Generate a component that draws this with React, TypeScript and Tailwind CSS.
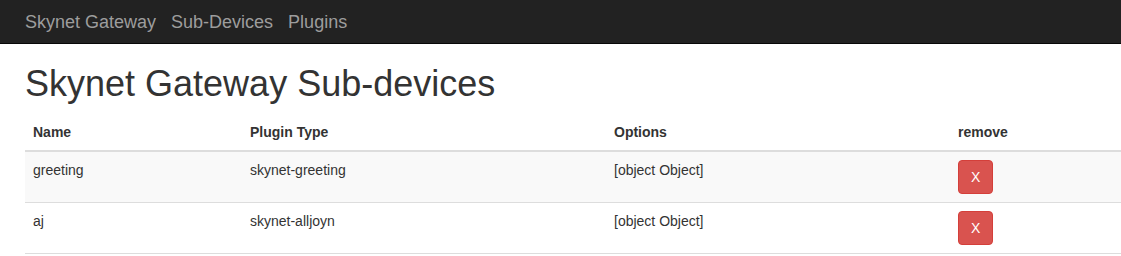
import React from "react";

const rows = [
  { name: "greeting", type: "skynet-greeting", options: "[object Object]" },
  { name: "aj", type: "skynet-alljoyn", options: "[object Object]" },
];

export default function App() {
  return (
    <div className="min-h-[256px] bg-white text-[14px] leading-[20px] text-[#333333] [font-family:'Liberation_Sans',Arial,sans-serif]">
      <nav className="flex h-[44px] items-center gap-[15px] border-b border-[#080808] bg-[#222222] pl-[25px] text-[18px] leading-[20px] text-[#9d9d9d]">
        <span>Skynet Gateway</span>
        <span>Sub-Devices</span>
        <span>Plugins</span>
      </nav>
      <div className="pl-[25px]">
        <h1 className="mt-[20px] mb-[10px] text-[36px] leading-[39.6px] font-normal text-[#333333]">
          Skynet Gateway Sub-devices
        </h1>
        <table className="w-[1096px] table-fixed border-collapse">
          <colgroup>
            <col className="w-[217px]" />
            <col className="w-[364px]" />
            <col className="w-[344px]" />
            <col />
          </colgroup>
          <thead>
            <tr>
              <th className="border-b-2 border-[#dddddd] p-2 text-left align-bottom font-bold">Name</th>
              <th className="border-b-2 border-[#dddddd] p-2 text-left align-bottom font-bold">Plugin Type</th>
              <th className="border-b-2 border-[#dddddd] p-2 text-left align-bottom font-bold">Options</th>
              <th className="border-b-2 border-[#dddddd] p-2 text-left align-bottom font-bold">remove</th>
            </tr>
          </thead>
          <tbody>
            {rows.map((r, i) => (
              <tr key={r.name} className={i % 2 === 0 ? "bg-[#f9f9f9]" : "bg-white"}>
                <td className="border-b border-[#dddddd] p-2 align-top">{r.name}</td>
                <td className="border-b border-[#dddddd] p-2 align-top">{r.type}</td>
                <td className="border-b border-[#dddddd] p-2 align-top">{r.options}</td>
                <td className="border-b border-[#dddddd] p-2 align-top">
                  <button className="rounded-[4px] border border-[#d43f3a] bg-[#d9534f] px-3 py-[6px] text-[14px] leading-[20px] text-white">
                    X
                  </button>
                </td>
              </tr>
            ))}
          </tbody>
        </table>
      </div>
    </div>
  );
}
